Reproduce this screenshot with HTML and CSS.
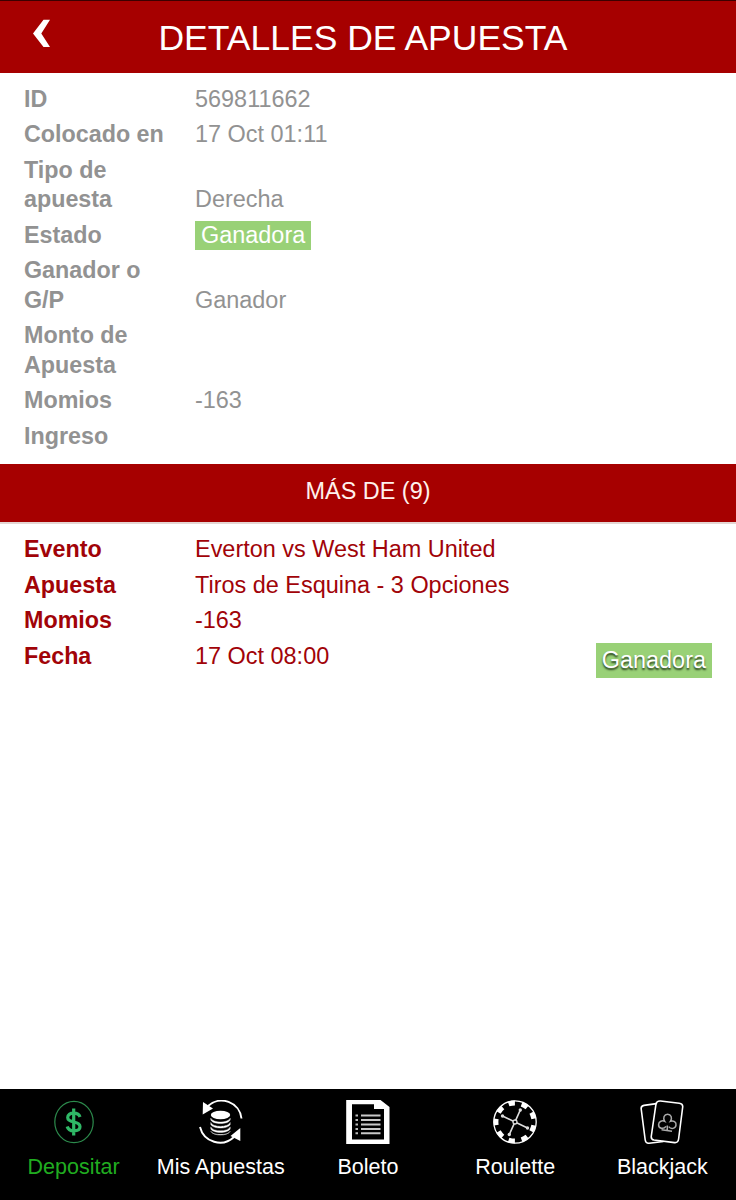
FILE: index.html
```html
<!DOCTYPE html>
<html lang="es">
<head>
<meta charset="utf-8">
<title>Detalles de apuesta</title>
<link rel="stylesheet" href="styles.css">
</head>
<body>
<div class="app">
  <header class="header">
    <svg class="back" width="20" height="30" viewBox="0 0 20 30"><path d="M11.500 .7H18L9.300 14.400L18 28H11.500L1 14.400Z" fill="#fff"/></svg>
    <h1 class="title">DETALLES DE APUESTA</h1>
  </header>
  <main class="main">
    <dl class="details">
      <div class="row"><dt>ID</dt><dd>569811662</dd></div>
      <div class="row"><dt>Colocado en</dt><dd>17 Oct 01:11</dd></div>
      <div class="row"><dt>Tipo de<br>apuesta</dt><dd>Derecha</dd></div>
      <div class="row"><dt>Estado</dt><dd><span class="tag">Ganadora</span></dd></div>
      <div class="row"><dt>Ganador o<br>G/P</dt><dd>Ganador</dd></div>
      <div class="row"><dt>Monto de<br>Apuesta</dt><dd></dd></div>
      <div class="row"><dt>Momios</dt><dd>-163</dd></div>
      <div class="row"><dt>Ingreso</dt><dd></dd></div>
    </dl>
    <h2 class="band">MÁS DE (9)</h2>
    <section class="event">
      <dl class="details event-list">
        <div class="row"><dt>Evento</dt><dd>Everton vs West Ham United</dd></div>
        <div class="row"><dt>Apuesta</dt><dd>Tiros de Esquina - 3 Opciones</dd></div>
        <div class="row"><dt>Momios</dt><dd>-163</dd></div>
        <div class="row"><dt>Fecha</dt><dd>17 Oct 08:00</dd></div>
      </dl>
      <span class="result">Ganadora</span>
    </section>
  </main>
  <nav class="nav">
    <a class="item active">
      <svg class="icon" viewBox="0 0 44 44" fill="none">
        <ellipse cx="22" cy="22" rx="19.200" ry="20.700" stroke="#2c8a4c" stroke-width="1.200"/>
        <path d="M28 17C27 13.800 24.700 13.200 21.700 13.200C18 13.200 15.700 14.800 15.700 17.500C15.700 20.300 18 21.200 21.700 22C25.600 22.800 28 23.800 28 26.700C28 29.500 25.300 30.800 21.700 30.800C18.200 30.800 16 29.500 15.200 26.500M21.700 8.500V35.500" stroke="#2fb866" stroke-width="3.200"/>
      </svg>
      <span>Depositar</span>
    </a>
    <a class="item">
      <svg class="icon" viewBox="0 0 44 44" fill="none">
        <path d="M9 6A20 20 0 0 1 42.500 18.500M1 27A20.500 20.500 0 0 0 35 37" stroke="#fff" stroke-width="1.900"/>
        <path d="M4 2L14 8.500L3.700 14.500ZM41.300 28V41L31.500 36Z" fill="#fff"/>
        <ellipse cx="21.500" cy="15" rx="9.700" ry="4.200" fill="#fff"/>
        <path d="M11.800 18.200C14 23.300 29 23.300 31.200 18.200V20C29 24.800 14 24.800 11.800 20ZM11.800 22.500C14 27.700 29 27.700 31.200 22.500V24.600C29 29.200 14 29.200 11.800 24.600ZM11.800 26.900C14 32.100 29 32.100 31.200 26.900V29C29 33.600 14 33.600 11.800 29ZM11.800 31.200C14 36.300 29 36.300 31.200 31.200C30 35.700 13 35.700 11.800 31.200Z" fill="#fff" stroke="#fff" stroke-width=".4"/>
      </svg>
      <span>Mis Apuestas</span>
    </a>
    <a class="item">
      <svg class="icon" viewBox="0 0 44 44" fill="none">
        <path fill-rule="evenodd" d="M.2 0H34.500L43.500 7V44H.2ZM6 4.200V39.500H38V9H28V4.200Z" fill="#fff"/>
        <path d="M15 15.500H34.500M15 20H34.500M15 24.500H34.500M15 29H34.500M15 33.300H34.500" stroke="#c9c9c9" stroke-width="1.900"/>
        <path d="M9.500 15.500H12M9.500 20H12M9.500 24.500H12M9.500 29H12M9.500 33.300H12" stroke="#bbb" stroke-width="1.900"/>
      </svg>
      <span>Boleto</span>
    </a>
    <a class="item">
      <svg class="icon" viewBox="0 0 44 44" fill="none">
        <circle cx="22" cy="22" r="21.200" stroke="#fff" stroke-width="1.300"/>
        <circle cx="22" cy="22" r="19" stroke="#fff" stroke-width="4.800" pathLength="100" stroke-dasharray="5.400 5.711" stroke-dashoffset="2.700" transform="rotate(180 22 22)"/>
        <path d="M27.300 10L16.300 34.500M9.500 16L34.500 28" stroke="#ddd" stroke-width="1.700"/>
        <circle cx="22" cy="22" r="2" fill="#000" stroke="#ddd" stroke-width="1.300"/>
        <g fill="#ddd"><circle cx="27.300" cy="10" r="1.700"/><circle cx="16.300" cy="34.500" r="1.700"/><circle cx="9.500" cy="16" r="1.700"/><circle cx="34.500" cy="28" r="1.700"/></g>
      </svg>
      <span>Roulette</span>
    </a>
    <a class="item">
      <svg class="icon" viewBox="0 0 44 44" fill="none" stroke="#fff" stroke-width="1.600">
        <path d="M16.500 3.600L4 5.400Q.8 6 1.200 9L5.200 40Q5.700 43.500 9 43.200L23.500 41.500"/>
        <path d="M20.500 1L39.300 3.200Q43 3.700 42.700 7L38.600 39Q38 43 34.500 42.600L14 40Q10.800 39.500 11.300 36L16 4Q16.700 .7 20.500 1Z"/>
        <path d="M25.900 26.300C23.700 29.800 18.300 28.500 18.600 24.500C18.800 21.200 22.400 20.200 24.700 21.300C22.600 17.700 24.200 14.300 27.600 14.300C31 14.300 32.700 17.800 30.400 21.300C33.500 20.300 36.500 22 36 25.200C35.500 28.800 31 29.600 28.700 26.600M27.300 25.500V30.500M21.500 29.800L32 31.300" stroke="#aaa" stroke-width="1.500"/>
      </svg>
      <span>Blackjack</span>
    </a>
  </nav>
</div>
</body>
</html>
```

FILE: styles.css
```css
* {
  box-sizing: border-box;
}

body {
  margin: 0;
  background: #fff;
  font-family: "Liberation Sans", Arial, sans-serif;
  font-size: 23.45px;
  line-height: 29.5px;
}

.app {
  display: flex;
  flex-direction: column;
  height: 1200px;
}

.header {
  display: grid;
  grid-template-columns: 128px 1fr 138px;
  flex: none;
  height: 72.5px;
  border-top: 1px solid #3c0000;
  background: #a60000;
  color: #fff;
}

.back {
  margin: 18px 0 0 32px;
}

.title {
  margin: 0;
  padding-top: 1px;
  font-size: 35.5px;
  font-weight: normal;
  line-height: 72px;
  text-align: center;
  white-space: nowrap;
}

.main {
  flex: 1;
}

.details {
  margin: 0;
  padding: 12px 0 7px 24px;
  color: #929292;
}

.row {
  display: grid;
  grid-template-columns: 171px 1fr;
  align-items: end;
  margin-bottom: 6px;
}

.row dt {
  font-weight: bold;
  font-size: 23.3px;
}

.row dd {
  margin: 0;
  white-space: nowrap;
}

.tag {
  display: inline-block;
  height: 29.5px;
  padding: 0 6px;
  background: #99d177;
  color: #fff;
  vertical-align: top;
}

.band {
  height: 60px;
  margin: 0;
  padding-top: 13px;
  border-bottom: 2px solid #e4d6d3;
  background: #a60000;
  color: #fff1ec;
  font-size: inherit;
  font-weight: normal;
  text-align: center;
}

.event {
  display: flex;
  justify-content: space-between;
  align-items: flex-end;
  padding-right: 24px;
}

.event-list {
  padding: 11px 0 0 24px;
  color: #a10308;
}

.result {
  height: 35px;
  padding: 0 6px;
  margin-bottom: -1px;
  background: #99d177;
  color: #fff;
  line-height: 35px;
  text-shadow: 0 2px 2px #263c1b;
}

.nav {
  display: grid;
  grid-template-columns: repeat(5, 1fr);
  flex: none;
  height: 111px;
  background: #000;
  color: #fff;
  font-size: 21.5px;
}

.item {
  display: flex;
  flex-direction: column;
  align-items: center;
  padding-top: 11px;
  white-space: nowrap;
}

.active {
  color: #20ac20;
}

.icon {
  width: 44px;
  height: 44px;
  margin-bottom: 9px;
}
```
